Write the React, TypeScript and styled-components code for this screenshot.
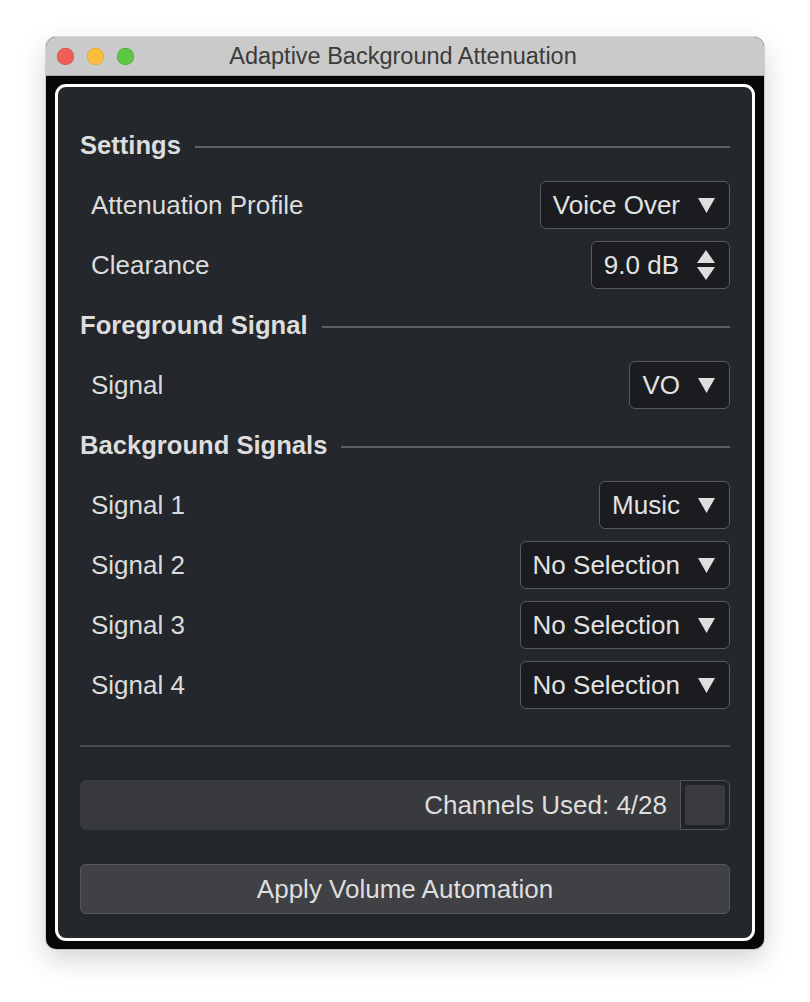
import styled, { createGlobalStyle } from "styled-components";

const GlobalStyle = createGlobalStyle`
  html, body {
    margin: 0;
    padding: 0;
    background: #ffffff;
  }
  body {
    font-family: "Liberation Sans", Arial, sans-serif;
  }
`;

const Page = styled.div`
  padding: 37px 0 0 46px;
  height: 1002px;
  box-sizing: border-box;
`;

const Window = styled.div`
  width: 718px;
  border-radius: 10px;
  background: #070707;
  box-shadow: 0 10px 28px rgba(0, 0, 0, 0.18), 0 0 0 1px rgba(0, 0, 0, 0.12);
  overflow: hidden;
`;

const TitleBar = styled.div`
  height: 39px;
  background: #cacaca;
  display: flex;
  align-items: center;
  border-bottom: 1px solid #a9a9a9;
  box-sizing: border-box;
`;

const Lights = styled.div`
  display: flex;
  gap: 13px;
  padding-left: 11px;
  width: 88px;
  box-sizing: border-box;
`;

const Light = styled.span<{ $color: string; $edge: string }>`
  width: 17px;
  height: 17px;
  border-radius: 50%;
  background: ${(p) => p.$color};
  box-shadow: inset 0 0 0 0.5px ${(p) => p.$edge};
`;

const Title = styled.div`
  flex: 1;
  text-align: center;
  font-size: 23.5px;
  color: #3b3b3b;
  margin-right: 92px;
`;

const Body = styled.div`
  padding: 8px 9px 8px 9px;
`;

const Panel = styled.div`
  border: 3px solid #ffffff;
  border-radius: 11px;
  background: #24272b;
  padding: 28px 22px 24px 22px;
  color: #dddddd;
`;

const Section = styled.div`
  display: flex;
  align-items: center;
  height: 60px;
  gap: 14px;
`;

const SectionTitle = styled.div`
  font-weight: bold;
  font-size: 25.6px;
  color: #dddddd;
  white-space: nowrap;
`;

const Rule = styled.div`
  flex: 1;
  height: 2px;
  background: #5e6064;
  margin-top: 4px;
`;

const Row = styled.div`
  display: flex;
  align-items: center;
  justify-content: space-between;
  height: 60px;
  padding-left: 11px;
`;

const Label = styled.div`
  font-size: 26px;
  color: #dcdcdc;
`;

const Select = styled.div`
  height: 48px;
  box-sizing: border-box;
  border: 1.5px solid #595b5f;
  border-radius: 6px;
  background: #1b1c1f;
  display: flex;
  align-items: center;
  gap: 18px;
  padding: 0 14px 0 12px;
  font-size: 26px;
  color: #e2e2e2;
`;

const Divider = styled.div`
  height: 2px;
  background: #4a4c50;
  margin: 30px 0 33px;
`;

const StatusBar = styled.div`
  display: flex;
  height: 50px;
  border-radius: 6px;
  background: #393a3e;
  overflow: hidden;
`;

const StatusText = styled.div`
  flex: 1;
  display: flex;
  align-items: center;
  justify-content: flex-end;
  padding-right: 13px;
  font-size: 26px;
  color: #dedede;
`;

const Swatch = styled.div`
  width: 50px;
  box-sizing: border-box;
  border: 1.5px solid #54565a;
  border-radius: 0 6px 6px 0;
  background: #222428;
  padding: 4px;
  display: flex;
`;

const SwatchInner = styled.div`
  flex: 1;
  border-radius: 3px;
  background: #3a3b3e;
`;

const ApplyButton = styled.button`
  display: block;
  width: 100%;
  height: 50px;
  margin-top: 34px;
  border: 1.5px solid #55575b;
  border-radius: 6px;
  background: #404145;
  color: #dedede;
  font-family: "Liberation Sans", Arial, sans-serif;
  font-size: 26px;
`;

const Arrow = () => (
  <svg width="17" height="15" viewBox="0 0 17 15">
    <path d="M0 0 H17 L8.5 15 Z" fill="#dedede" />
  </svg>
);

const Stepper = () => (
  <svg width="18" height="30" viewBox="0 0 18 30">
    <path d="M9 0 L18 13 H0 Z" fill="#dedede" />
    <path d="M0 17 H18 L9 30 Z" fill="#dedede" />
  </svg>
);

const Dropdown = ({ value }: { value: string }) => (
  <Select>
    {value}
    <Arrow />
  </Select>
);

export default function App() {
  return (
    <>
      <GlobalStyle />
      <Page>
        <Window>
          <TitleBar>
            <Lights>
              <Light $color="#ee5f57" $edge="#d24a43" />
              <Light $color="#f8bd3b" $edge="#d9a02c" />
              <Light $color="#5dc643" $edge="#47a834" />
            </Lights>
            <Title>Adaptive Background Attenuation</Title>
          </TitleBar>
          <Body>
            <Panel>
              <Section>
                <SectionTitle>Settings</SectionTitle>
                <Rule />
              </Section>
              <Row>
                <Label>Attenuation Profile</Label>
                <Dropdown value="Voice Over" />
              </Row>
              <Row>
                <Label>Clearance</Label>
                <Select>
                  9.0 dB
                  <Stepper />
                </Select>
              </Row>
              <Section>
                <SectionTitle>Foreground Signal</SectionTitle>
                <Rule />
              </Section>
              <Row>
                <Label>Signal</Label>
                <Dropdown value="VO" />
              </Row>
              <Section>
                <SectionTitle>Background Signals</SectionTitle>
                <Rule />
              </Section>
              <Row>
                <Label>Signal 1</Label>
                <Dropdown value="Music" />
              </Row>
              <Row>
                <Label>Signal 2</Label>
                <Dropdown value="No Selection" />
              </Row>
              <Row>
                <Label>Signal 3</Label>
                <Dropdown value="No Selection" />
              </Row>
              <Row>
                <Label>Signal 4</Label>
                <Dropdown value="No Selection" />
              </Row>
              <Divider />
              <StatusBar>
                <StatusText>Channels Used: 4/28</StatusText>
                <Swatch>
                  <SwatchInner />
                </Swatch>
              </StatusBar>
              <ApplyButton>Apply Volume Automation</ApplyButton>
            </Panel>
          </Body>
        </Window>
      </Page>
    </>
  );
}
